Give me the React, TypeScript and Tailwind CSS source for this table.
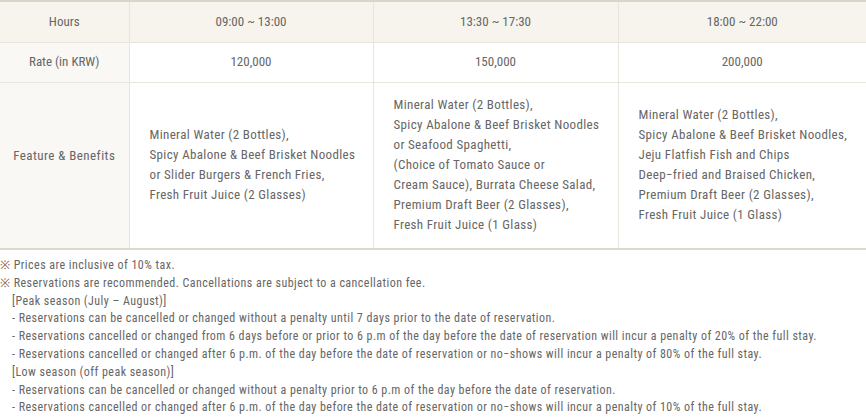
import React from "react";

const font = { fontFamily: '"Liberation Sans Narrow", "Roboto Condensed", Roboto, "Liberation Sans", sans-serif' };

export default function App() {
  const td = "border-l border-[#e8e5dc] text-center align-middle";
  const feat = "border-l border-[#e8e5dc] pl-[20px] leading-[20px] tracking-[0.35px]";
  return (
    <div className="w-[866px] h-[418px] bg-white text-[#666] text-[13px] overflow-hidden" style={font}>
      <table className="w-full border-collapse border-t-2 border-t-[#d9d5c8] border-b-2 border-b-[#dcd9d0]">
        <colgroup>
          <col className="w-[129px]" />
          <col className="w-[244px]" />
          <col className="w-[245px]" />
          <col className="w-[248px]" />
        </colgroup>
        <tbody>
          <tr className="h-[41px] bg-[#f6f4ed] border-b border-[#e8e5dc]">
            <td className="text-center">Hours</td>
            <td className={td}>09:00 ~ 13:00</td>
            <td className={td}>13:30 ~ 17:30</td>
            <td className={td}>18:00 ~ 22:00</td>
          </tr>
          <tr className="h-[40px] border-b border-[#e8e5dc]">
            <td className="text-center bg-[#f9f8f4]">Rate (in KRW)</td>
            <td className={td}>120,000</td>
            <td className={td}>150,000</td>
            <td className={td}>200,000</td>
          </tr>
          <tr className="h-[167px]">
            <td className="text-center bg-[#f9f8f4] tracking-[0.45px] pb-[20px]">Feature &amp; Benefits</td>
            <td className={feat}>
              Mineral Water (2 Bottles),<br />
              Spicy Abalone &amp; Beef Brisket Noodles<br />
              or Slider Burgers &amp; French Fries,<br />
              Fresh Fruit Juice (2 Glasses)
            </td>
            <td className={feat}>
              Mineral Water (2 Bottles),<br />
              Spicy Abalone &amp; Beef Brisket Noodles<br />
              or Seafood Spaghetti,<br />
              (Choice of Tomato Sauce or<br />
              Cream Sauce), Burrata Cheese Salad,<br />
              Premium Draft Beer (2 Glasses),<br />
              Fresh Fruit Juice (1 Glass)
            </td>
            <td className={feat}>
              Mineral Water (2 Bottles),<br />
              Spicy Abalone &amp; Beef Brisket Noodles,<br />
              Jeju Flatfish Fish and Chips<br />
              Deep−fried and Braised Chicken,<br />
              Premium Draft Beer (2 Glasses),<br />
              Fresh Fruit Juice (1 Glass)
            </td>
          </tr>
        </tbody>
      </table>
      <div className="pt-[7px] text-[12px] leading-[17.8px] tracking-[0.45px]">
        <p>※ Prices are inclusive of 10% tax.</p>
        <p>※ Reservations are recommended. Cancellations are subject to a cancellation fee.</p>
        <div className="pl-[12px]">
          <p>[Peak season (July – August)]</p>
          <p>- Reservations can be cancelled or changed without a penalty until 7 days prior to the date of reservation.</p>
          <p>- Reservations cancelled or changed from 6 days before or prior to 6 p.m of the day before the date of reservation will incur a penalty of 20% of the full stay.</p>
          <p>- Reservations cancelled or changed after 6 p.m. of the day before the date of reservation or no−shows will incur a penalty of 80% of the full stay.</p>
          <p>[Low season (off peak season)]</p>
          <p>- Reservations can be cancelled or changed without a penalty prior to 6 p.m of the day before the date of reservation.</p>
          <p>- Reservations cancelled or changed after 6 p.m. of the day before the date of reservation or no−shows will incur a penalty of 10% of the full stay.</p>
        </div>
      </div>
    </div>
  );
}
